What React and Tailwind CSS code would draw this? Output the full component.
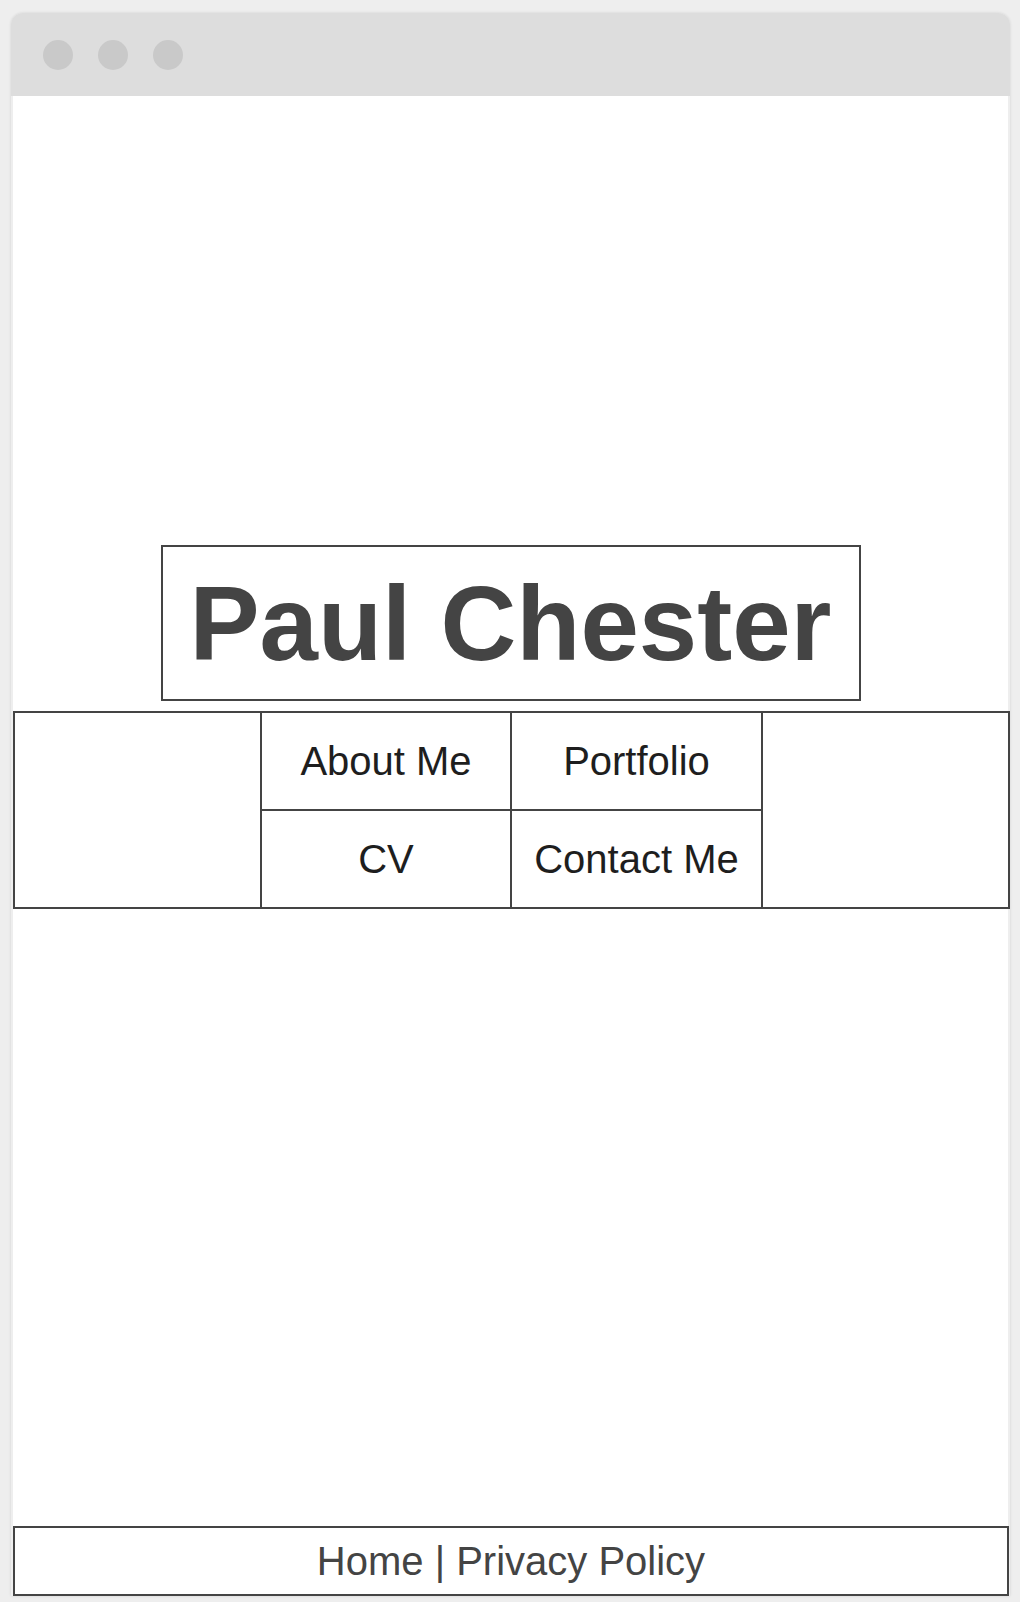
const font = { fontFamily: '"Liberation Sans", Arial, sans-serif' }

function TitleBar() {
  return (
    <div className="h-[83px] rounded-t-[12px] bg-[#dddddd] flex items-center gap-[25px] pl-[32px]">
      <span className="w-[30px] h-[30px] rounded-full bg-[#c9c9c9]" />
      <span className="w-[30px] h-[30px] rounded-full bg-[#c9c9c9]" />
      <span className="w-[30px] h-[30px] rounded-full bg-[#c9c9c9]" />
    </div>
  )
}

function NavCell({ children }) {
  return (
    <a href="#" className="bg-white flex items-center justify-center text-[40px] text-[#1e1e1e] leading-none">
      {children}
    </a>
  )
}

function Nav() {
  return (
    <nav className="mt-[10px] w-[997px] h-[198px] border-2 border-[#444444] bg-[#444444] grid grid-cols-[245px_248px_249px_1fr] grid-rows-2 gap-[2px]">
      <div className="bg-white row-span-2" />
      <NavCell>About Me</NavCell>
      <NavCell>Portfolio</NavCell>
      <div className="bg-white row-span-2 col-start-4 row-start-1" />
      <NavCell>CV</NavCell>
      <NavCell>Contact Me</NavCell>
    </nav>
  )
}

export default function App() {
  return (
    <div className="min-h-[1602px] bg-[#eeeeee] pt-[13px] pl-[11px]" style={font}>
      <div className="w-[999px] rounded-t-[12px] shadow-[0_0_3px_rgba(0,0,0,0.12)]">
        <TitleBar />
        <div className="bg-white ml-[2px] w-[995px] pt-[449px]">
          <header className="mx-auto w-[700px] h-[156px] border-2 border-[#444444] flex items-center justify-center">
            <h1 className="text-[105px] font-bold text-[#444444] leading-none">Paul Chester</h1>
          </header>
          <Nav />
          <footer className="mt-[617px] w-[996px] h-[70px] border-2 border-[#444444] flex items-center justify-center text-[40px] text-[#444444] leading-none">
            <span>Home | Privacy Policy</span>
          </footer>
        </div>
      </div>
    </div>
  )
}
